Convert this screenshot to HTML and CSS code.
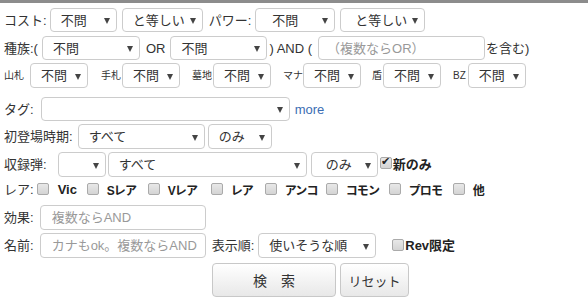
FILE: index.html
```html
<!DOCTYPE html>
<html lang="ja">
<head>
<meta charset="utf-8">
<title>検索</title>
<link rel="stylesheet" href="styles.css">
</head>
<body>
<div class="topbar"></div>
<form class="search">
  <div class="row r1">
    <span class="lbl">コスト:</span>
    <span class="sel w67 ml3"><select><option>不問</option></select></span>
    <span class="sel w81 ml5"><select><option>と等しい</option></select></span>
    <span class="lbl ml6">パワー:</span>
    <span class="sel w80 ml4"><select class="pl16"><option>不問</option></select></span>
    <span class="sel w85 ml5"><select class="pl14"><option>と等しい</option></select></span>
  </div>
  <div class="row r2">
    <span class="lbl">種族:(</span>
    <span class="sel w98 ml4"><select><option>不問</option></select></span>
    <span class="lbl ml6">OR</span>
    <span class="sel w97 ml5"><select><option>不問</option></select></span>
    <span class="lbl ml2">) AND (</span>
    <input class="txt w167 ml6" type="text" placeholder="（複数ならOR）">
    <span class="lbl ml1">を含む)</span>
  </div>
  <div class="row r3">
    <span class="small">山札</span>
    <span class="sel s58 ml6"><select><option>不問</option></select></span>
    <span class="small ml13">手札</span>
    <span class="sel s58 ml1"><select><option>不問</option></select></span>
    <span class="small ml12">墓地</span>
    <span class="sel s58 ml1"><select><option>不問</option></select></span>
    <span class="small ml12">マナ</span>
    <span class="sel s58"><select><option>不問</option></select></span>
    <span class="small ml11">盾</span>
    <span class="sel s58 ml1"><select><option>不問</option></select></span>
    <span class="small ml12">BZ</span>
    <span class="sel s58 ml2"><select><option>不問</option></select></span>
  </div>
  <div class="row r4">
    <span class="lbl">タグ:</span>
    <span class="sel w249 ml7"><select><option></option></select></span>
    <a class="more ml5" href="#">more</a>
  </div>
  <div class="row r5">
    <span class="lbl">初登場時期:</span>
    <span class="sel w127 ml5"><select><option>すべて</option></select></span>
    <span class="sel w64 ml3"><select><option>のみ</option></select></span>
  </div>
  <div class="row r6">
    <span class="lbl">収録弾:</span>
    <span class="sel w48 ml11"><select><option></option></select></span>
    <span class="sel w199 ml2"><select><option>すべて</option></select></span>
    <span class="sel w67 ml4"><select class="pl14"><option>のみ</option></select></span>
    <label class="chk ml2 up1"><input type="checkbox" checked><b>新のみ</b></label>
  </div>
  <div class="row r7">
    <span class="lbl">レア:</span>
    <div class="rares">
      <label class="chk it50"><input type="checkbox"><b class="gap latin">Vic</b></label>
      <label class="chk it61"><input type="checkbox"><b class="gap">Sレア</b></label>
      <label class="chk it63"><input type="checkbox"><b class="gap">Vレア</b></label>
      <label class="chk it54"><input type="checkbox"><b class="gap">レア</b></label>
      <label class="chk it61"><input type="checkbox"><b class="gap">アンコ</b></label>
      <label class="chk it63"><input type="checkbox"><b class="gap">コモン</b></label>
      <label class="chk it64"><input type="checkbox"><b class="gap">プロモ</b></label>
      <label class="chk"><input type="checkbox"><b class="gap">他</b></label>
    </div>
  </div>
  <div class="row r8">
    <span class="lbl">効果:</span>
    <input class="txt w166 ml6 pl12" type="text" placeholder="複数ならAND">
  </div>
  <div class="row r9">
    <span class="lbl">名前:</span>
    <input class="txt w166 ml6 pl12" type="text" placeholder="カナもok。複数ならAND">
    <span class="lbl ml6">表示順:</span>
    <span class="sel w118 ml4"><select><option>使いそうな順</option></select></span>
    <label class="chk ml16 up"><input type="checkbox"><b>Rev限定</b></label>
  </div>
  <div class="row r10">
    <button type="button" class="btn b-search">検　索</button>
    <button type="button" class="btn b-reset">リセット</button>
  </div>
</form>
</body>
</html>
```
FILE: styles.css
```css
html, body {
  margin: 0;
  padding: 0;
  background: #fff;
}
body {
  font-family: "Liberation Sans", "Noto Sans CJK JP", sans-serif;
  font-size: 13px;
  color: #333;
}
.topbar {
  height: 3px;
  background: #8c8c8c;
}
.search {
  display: flex;
  flex-direction: column;
  padding: 0 4px;
}
.row {
  display: flex;
  align-items: center;
  white-space: nowrap;
}
.r1 { margin-top: 5px; height: 24px; }
.r2 { margin-top: 4px; height: 24px; }
.r3 { margin-top: 3px; height: 25px; }
.r4 { margin-top: 9px; height: 24px; }
.r5 { margin-top: 3px; height: 25px; }
.r6 { margin-top: 3px; height: 25px; }
.r7 { margin-top: 3px; height: 18px; }
.r8 { margin-top: 7px; height: 25px; }
.r9 { margin-top: 3px; height: 25px; }
.r10 { margin-top: 5px; height: 34px; padding-left: 208px; }

.lbl { line-height: 1; }
.small { font-size: 10px; line-height: 1; }

.sel {
  position: relative;
  display: inline-block;
  height: 100%;
  flex-shrink: 0;
}
.sel select {
  appearance: none;
  -webkit-appearance: none;
  box-sizing: border-box;
  width: 100%;
  height: 100%;
  margin: 0;
  border: 1px solid #ccc;
  border-radius: 4px;
  background: #fff;
  color: #333;
  font: inherit;
  font-size: 13px;
  padding: 0 12px 0 10px;
}
.sel select.pl16 { padding-left: 16px; }
.sel select.pl14 { padding-left: 14px; }
.sel::after {
  content: "";
  position: absolute;
  right: 7px;
  top: 50%;
  margin-top: -2px;
  border-left: 3.5px solid transparent;
  border-right: 3.5px solid transparent;
  border-top: 6px solid #444;
  pointer-events: none;
}
.s58 { width: 58px; }
.w48 { width: 48px; }
.w64 { width: 64px; }
.w67 { width: 67px; }
.w80 { width: 80px; }
.w81 { width: 81px; }
.w85 { width: 85px; }
.w97 { width: 97px; }
.w98 { width: 98px; }
.w118 { width: 118px; }
.w127 { width: 127px; }
.w199 { width: 199px; }
.w249 { width: 249px; }
.w166 { width: 166px; }
.w167 { width: 167px; }

.txt {
  box-sizing: border-box;
  height: 100%;
  margin: 0;
  border: 1px solid #ccc;
  border-radius: 4px;
  font: inherit;
  font-size: 13px;
  color: #333;
  padding: 0 8px;
  flex-shrink: 0;
}
.txt.pl12 { padding-left: 11px; }
.txt::placeholder { color: #999; }

.more {
  color: #3b6db3;
  text-decoration: none;
  font-size: 13px;
}

.rares {
  display: flex;
  align-items: center;
  margin-left: 3px;
}
.it50 { width: 50px; }
.it54 { width: 54px; }
.it61 { width: 61px; }
.it63 { width: 63px; }
.it64 { width: 64px; }

.chk {
  display: inline-flex;
  align-items: center;
  font-size: 13px;
  flex-shrink: 0;
}
.chk b { font-weight: bold; color: #222; }
.chk b.gap {
  margin-left: 7px;
  font-size: 12px;
  letter-spacing: -0.8px;
}
.chk b.gap.latin {
  margin-left: 8px;
  font-size: 13px;
  letter-spacing: 0;
}
.chk input {
  appearance: none;
  -webkit-appearance: none;
  box-sizing: border-box;
  width: 12px;
  height: 12px;
  margin: 0 1px 0 0;
  border: 1px solid #aaa;
  border-radius: 2px;
  background: linear-gradient(#e8e8e8, #d4d4d4);
  position: relative;
  flex-shrink: 0;
}
.chk input:checked::after {
  content: "✔";
  position: absolute;
  left: 0;
  top: -3px;
  font-size: 11px;
  color: #222;
}
.up { align-self: flex-start; margin-top: 2px; }
.up1 { margin-top: -3px; }

.btn {
  box-sizing: border-box;
  height: 34px;
  border: 1px solid #c8c8c8;
  border-radius: 4px;
  background: linear-gradient(#ffffff, #e8e8e8);
  color: #333;
  font: inherit;
  font-size: 14px;
  padding: 0;
}
.b-search { width: 124px; }
.b-reset { width: 69px; margin-left: 4px; font-size: 13px; }

.ml1 { margin-left: 1px; }
.ml2 { margin-left: 2px; }
.ml3 { margin-left: 3px; }
.ml4 { margin-left: 4px; }
.ml5 { margin-left: 5px; }
.ml6 { margin-left: 6px; }
.ml7 { margin-left: 7px; }
.ml9 { margin-left: 9px; }
.ml11 { margin-left: 11px; }
.ml12 { margin-left: 12px; }
.ml13 { margin-left: 13px; }
.ml16 { margin-left: 16px; }
```
